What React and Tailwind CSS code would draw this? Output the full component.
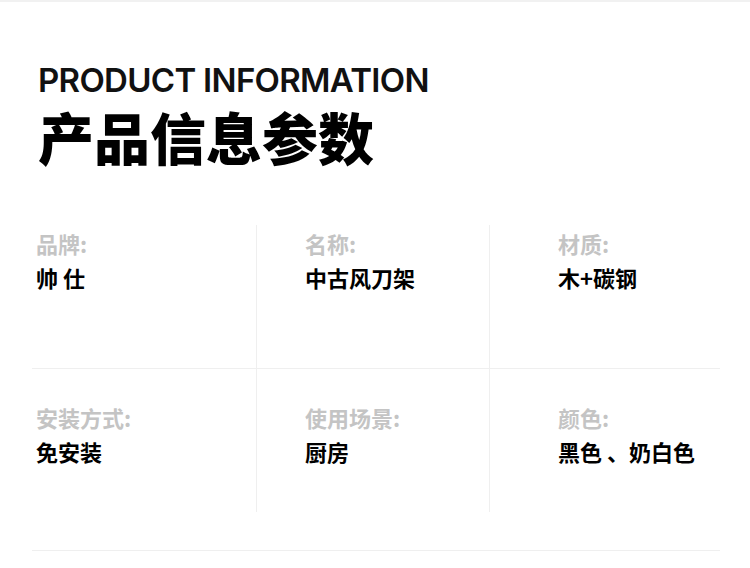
import React from 'react';

const specs = [
  [
    { label: '品牌:', value: '帅 仕' },
    { label: '名称:', value: '中古风刀架' },
    { label: '材质:', value: '木+碳钢' },
  ],
  [
    { label: '安装方式:', value: '免安装' },
    { label: '使用场景:', value: '厨房' },
    { label: '颜色:', value: '黑色 、奶白色' },
  ],
];

const colPad = ['pl-[4px]', 'pl-[48px]', 'pl-[68px]'];

const cjk = { fontFamily: '"Noto Sans CJK SC", "Noto Sans", sans-serif' };

const App = () => {
  return (
    <div className="w-[750px] h-[568px] bg-white overflow-hidden border-t-2 border-[#f1f1f1]">
      {/* Header */}
      <div className="pl-[38px] pt-[62px]">
        <div
          className="text-[33px] leading-[33px] font-semibold text-[#111] tracking-[-0.7px]"
          style={{ fontFamily: 'Inter, "Liberation Sans", sans-serif' }}
        >
          PRODUCT INFORMATION
        </div>
        <div className="mt-[11px] text-[56px] leading-[56px] font-black text-black" style={cjk}>
          产品信息参数
        </div>
      </div>

      {/* Spec grid */}
      <div className="ml-[32px] w-[688px] mt-[61px]" style={cjk}>
        {specs.map((row, r) => (
          <div
            key={r}
            className={`grid grid-cols-[225px_233px_230px] ${r === 0 ? 'border-b border-[#efefef]' : ''}`}
          >
            {row.map((cell, c) => (
              <div
                key={cell.label}
                className={`h-[143px] ${colPad[c]} ${r === 0 ? 'pt-[1px]' : 'pt-[31px]'} ${c < 2 ? 'border-r border-[#efefef]' : ''}`}
              >
                <div className="text-[22px] leading-[34px] font-bold text-[#c4c4c4]">{cell.label}</div>
                <div className="text-[22px] leading-[34px] font-bold text-black">{cell.value}</div>
              </div>
            ))}
          </div>
        ))}
        <div className="mt-[38px] h-px bg-[#efefef]" />
      </div>
    </div>
  );
};

export default App;
